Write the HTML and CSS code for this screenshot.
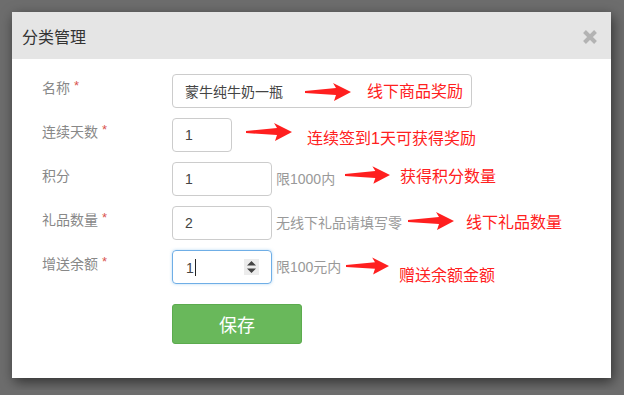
FILE: index.html
```html
<!DOCTYPE html>
<html lang="zh-CN">
<head>
  <meta charset="UTF-8" />
  <meta name="viewport" content="width=device-width, initial-scale=1.0" />
  <title>分类管理</title>
  <link rel="stylesheet" href="styles.css">
</head>
<body>
  <div class="modal">
    <div class="modal-header">
      <h4>分类管理</h4>
      <span class="close">
        <svg width="16" height="16" viewBox="0 0 16 16"><path d="M2.5 2.5 L13.5 13.5 M13.5 2.5 L2.5 13.5" stroke="#b3b3b3" stroke-width="4" /></svg>
      </span>
    </div>
    <div class="modal-body">
      <div class="row">
        <label>名称 <i>*</i></label>
        <input class="field wide" type="text" value="蒙牛纯牛奶一瓶" />
      </div>
      <div class="row">
        <label>连续天数 <i>*</i></label>
        <input class="field small" type="text" value="1" />
      </div>
      <div class="row">
        <label>积分</label>
        <input class="field" type="text" value="1" />
        <span class="hint">限1000内</span>
      </div>
      <div class="row">
        <label>礼品数量 <i>*</i></label>
        <input class="field" type="text" value="2" />
        <span class="hint">无线下礼品请填写零</span>
      </div>
      <div class="row">
        <label>增送余额 <i>*</i></label>
        <div class="field focus">
          <span>1<b class="caret"></b></span>
          <span class="spin">
            <svg width="9" height="12" viewBox="0 0 9 12"><path d="M4.5 0 L9 4.5 L0 4.5 Z M0 7.5 L9 7.5 L4.5 12 Z" fill="#444" /></svg>
          </span>
        </div>
        <span class="hint">限100元内</span>
      </div>
      <div class="row actions">
        <button class="btn-save">保存</button>
      </div>
    </div>

    <!-- annotations drawn over the form -->
    <svg class="arrow a1" width="46" height="18" viewBox="0 0 46 18"><polygon points="0,8 31,5 28,0 46,9 29,18 31,12 0,10" /></svg>
    <span class="note n1">线下商品奖励</span>
    <svg class="arrow a2" width="48" height="18" viewBox="0 0 46 18"><polygon points="0,8 31,5 28,0 46,9 29,18 31,12 0,10" /></svg>
    <span class="note n2">连续签到1天可获得奖励</span>
    <svg class="arrow a3" width="45" height="18" viewBox="0 0 46 18"><polygon points="0,8 31,5 28,0 46,9 29,18 31,12 0,10" /></svg>
    <span class="note n3">获得积分数量</span>
    <svg class="arrow a4" width="46" height="18" viewBox="0 0 46 18"><polygon points="0,8 31,5 28,0 46,9 29,18 31,12 0,10" /></svg>
    <span class="note n4">线下礼品数量</span>
    <svg class="arrow a5" width="43" height="18" viewBox="0 0 46 18"><polygon points="0,8 31,5 28,0 46,9 29,18 31,12 0,10" /></svg>
    <span class="note n5">赠送余额金额</span>
  </div>
</body>
</html>
```

FILE: styles.css
```css
body {
  margin: 0;
  padding: 12px;
  background: #6d6d6d;
  font-family: "Liberation Sans", "Noto Sans CJK SC", sans-serif;
}

.modal {
  position: relative;
  width: 599px;
  height: 366px;
  background: #fff;
  box-shadow: 2px 4px 12px rgba(0,0,0,0.55);
}

.modal-header {
  height: 47px;
  background: #e5e5e5;
  display: flex;
  align-items: center;
  justify-content: space-between;
  padding: 0 13px 0 10px;
}

.modal-header h4 {
  margin: 0;
  font-size: 16px;
  font-weight: normal;
  color: #333;
}

.close {
  display: flex;
  margin-top: 2px;
}

.modal-body {
  padding: 15px 0 0 30px;
}

.row {
  display: flex;
  align-items: flex-start;
  margin-bottom: 10px;
}

.row label {
  width: 130px;
  padding-top: 4px;
  font-size: 14px;
  line-height: 20px;
  color: #888;
}

.row label i {
  font-style: normal;
  color: #d9534f;
  font-size: 13px;
  position: relative;
  top: -3px;
}

.field {
  box-sizing: border-box;
  width: 100px;
  height: 34px;
  padding: 0 12px;
  border: 1px solid #ccc;
  border-radius: 4px;
  font-family: inherit;
  font-size: 14px;
  color: #444;
  outline: none;
}

.field.wide { width: 300px; }
.field.small { width: 60px; }

.field.focus {
  display: flex;
  align-items: center;
  justify-content: space-between;
  padding: 0 12px 0 13px;
  border-color: #6faee6;
  box-shadow: 0 0 3px rgba(102,175,233,0.5);
}

.caret {
  display: inline-block;
  width: 1px;
  height: 17px;
  background: #222;
  vertical-align: -3px;
  margin-left: 1px;
}

.spin {
  display: flex;
  align-items: center;
  justify-content: center;
  width: 15px;
  height: 16px;
  background: #ececec;
}

.hint {
  margin-left: 4px;
  line-height: 34px;
  font-size: 14px;
  color: #999;
}

.actions {
  margin-top: 20px;
  padding-left: 130px;
}

.btn-save {
  width: 130px;
  height: 40px;
  border: 1px solid #5cab4e;
  border-radius: 3px;
  background: #69b85b;
  color: #fff;
  font-family: inherit;
  font-size: 18px;
  cursor: pointer;
}

.arrow {
  position: absolute;
  fill: #ff1f1f;
}

.note {
  position: absolute;
  font-size: 16px;
  line-height: 20px;
  color: #ff2020;
  white-space: nowrap;
}

.a1 { left: 293px; top: 71px; }
.n1 { left: 355px; top: 70px; }
.a2 { left: 233px; top: 111px; }
.n2 { left: 295px; top: 117px; }
.a3 { left: 333px; top: 154px; }
.n3 { left: 388px; top: 155px; }
.a4 { left: 396px; top: 200px; }
.n4 { left: 454px; top: 201px; }
.a5 { left: 334px; top: 245px; }
.n5 { left: 387px; top: 254px; }
```
